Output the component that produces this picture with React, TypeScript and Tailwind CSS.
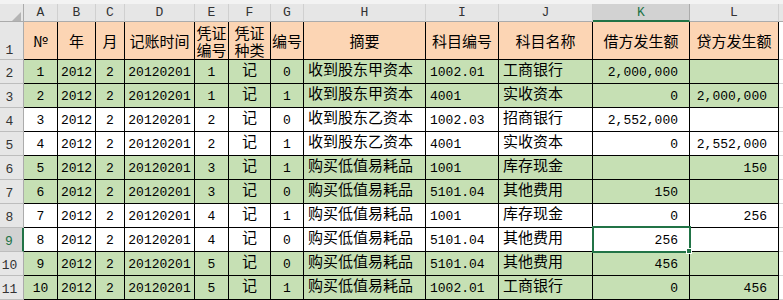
import React from "react";

const letters = ["A", "B", "C", "D", "E", "F", "G", "H", "I", "J", "K", "L"];

const heads = ["№", "年", "月", "记账时间", "凭证\n编号", "凭证\n种类", "编号", "摘要", "科目编号", "科目名称", "借方发生额", "贷方发生额"];

// row data: [shaded, ...cells]
const rows: { green: boolean; cells: string[] }[] = [
  { green: true, cells: ["1", "2012", "2", "20120201", "1", "记", "0", "收到股东甲资本", "1002.01", "工商银行", "2,000,000", ""] },
  { green: true, cells: ["2", "2012", "2", "20120201", "1", "记", "1", "收到股东甲资本", "4001", "实收资本", "0", "2,000,000"] },
  { green: false, cells: ["3", "2012", "2", "20120201", "2", "记", "0", "收到股东乙资本", "1002.03", "招商银行", "2,552,000", ""] },
  { green: false, cells: ["4", "2012", "2", "20120201", "2", "记", "1", "收到股东乙资本", "4001", "实收资本", "0", "2,552,000"] },
  { green: true, cells: ["5", "2012", "2", "20120201", "3", "记", "1", "购买低值易耗品", "1001", "库存现金", "", "150"] },
  { green: true, cells: ["6", "2012", "2", "20120201", "3", "记", "0", "购买低值易耗品", "5101.04", "其他费用", "150", ""] },
  { green: false, cells: ["7", "2012", "2", "20120201", "4", "记", "1", "购买低值易耗品", "1001", "库存现金", "0", "256"] },
  { green: false, cells: ["8", "2012", "2", "20120201", "4", "记", "0", "购买低值易耗品", "5101.04", "其他费用", "256", ""] },
  { green: true, cells: ["9", "2012", "2", "20120201", "5", "记", "0", "购买低值易耗品", "5101.04", "其他费用", "456", ""] },
  { green: true, cells: ["10", "2012", "2", "20120201", "5", "记", "1", "购买低值易耗品", "1002.01", "工商银行", "0", "456"] },
];

const hasCjk = (s: string) => /[\u4e00-\u9fff]/.test(s);

function alignFor(i: number) {
  if (i >= 10) return "justify-end pr-[11px]";
  if (i >= 7) return "justify-start pl-[4px]";
  return "justify-center";
}

export default function App() {
  return (
    <div
      className="w-[783px] h-[300px] overflow-hidden bg-white text-black"
      style={{ fontFamily: '"Liberation Mono", "Noto Sans CJK SC", monospace' }}
    >
      <div className="h-[4px] bg-[#f3f3f3]" />
      <div className="grid grid-cols-[24px_34px_38px_29px_70px_34px_42px_33px_122px_73px_94px_97px_89px_1fr]">
        {/* column letters */}
        <div className="relative h-[18px] bg-[#e6e6e6] border-r border-b border-[#ababab]">
          <svg className="absolute left-[12px] top-[8px]" width="9" height="9" viewBox="0 0 9 9">
            <polygon points="9,0 9,9 0,9" fill="#b4b4b4" />
          </svg>
        </div>
        {letters.map((l) =>
          l === "K" ? (
            <div key={l} className="h-[18px] flex items-center justify-center bg-[#d2d2d2] border-r border-[#ababab] border-b-2 border-b-[#217346] text-[13px] text-[#217346] leading-none">
              {l}
            </div>
          ) : (
            <div key={l} className="h-[18px] flex items-center justify-center bg-[#e6e6e6] border-r border-b border-r-[#d0d0d0] border-b-[#ababab] text-[13px] text-[#333] leading-none">
              {l}
            </div>
          )
        )}
        <div className="h-[18px] bg-[#e6e6e6] border-b border-[#ababab]" />

        {/* header row */}
        <div className="h-[38px] flex items-end justify-center pr-[4px] pb-[2px] bg-[#e6e6e6] border-r border-b border-r-[#ababab] border-b-[#bdbdbd] text-[13px] text-[#333] leading-none">
          1
        </div>
        {heads.map((h, i) => (
          <div
            key={i}
            className="h-[38px] flex items-center justify-center bg-[#fcd5b4] border-r border-b border-black text-[15px] leading-[17px] whitespace-pre text-center"
            style={{ fontFamily: '"Noto Sans CJK SC", sans-serif' }}
          >
            {h}
          </div>
        ))}
        <div className="h-[38px] border-b border-[#d4d4d4]" />

        {rows.map((r, ri) => {
          const selected = ri === 7;
          return (
            <React.Fragment key={ri}>
              <div
                className={
                  selected
                    ? "h-[24px] flex items-end justify-center pr-[4px] pb-[3px] bg-[#d2d2d2] border-b border-b-[#bdbdbd] border-r-2 border-r-[#217346] text-[13px] text-[#217346] leading-none"
                    : "h-[24px] flex items-end justify-center pr-[4px] pb-[3px] bg-[#e6e6e6] border-r border-b border-r-[#ababab] border-b-[#bdbdbd] text-[13px] text-[#333] leading-none"
                }
              >
                {ri + 2}
              </div>
              {r.cells.map((c, ci) => (
                <div
                  key={ci}
                  className={`relative h-[24px] flex items-center whitespace-nowrap border-r border-b border-black leading-none ${
                    r.green ? "bg-[#c6e0b4]" : "bg-white"
                  } ${alignFor(ci)} ${hasCjk(c) ? "text-[15px]" : "text-[13px] pt-[2px]"} ${
                    selected && ci === 10 ? "z-10" : ""
                  }`}
                >
                  {c}
                  {selected && ci === 10 && (
                    <div className="absolute -left-[1px] -top-[2px] w-[99px] h-[27px] border-2 border-[#217346]">
                      <div className="absolute -right-[3px] -bottom-[3px] w-[6px] h-[6px] bg-[#217346] border border-white" />
                    </div>
                  )}
                </div>
              ))}
              <div className="h-[24px] border-b border-[#d4d4d4]" />
            </React.Fragment>
          );
        })}
      </div>
    </div>
  );
}
